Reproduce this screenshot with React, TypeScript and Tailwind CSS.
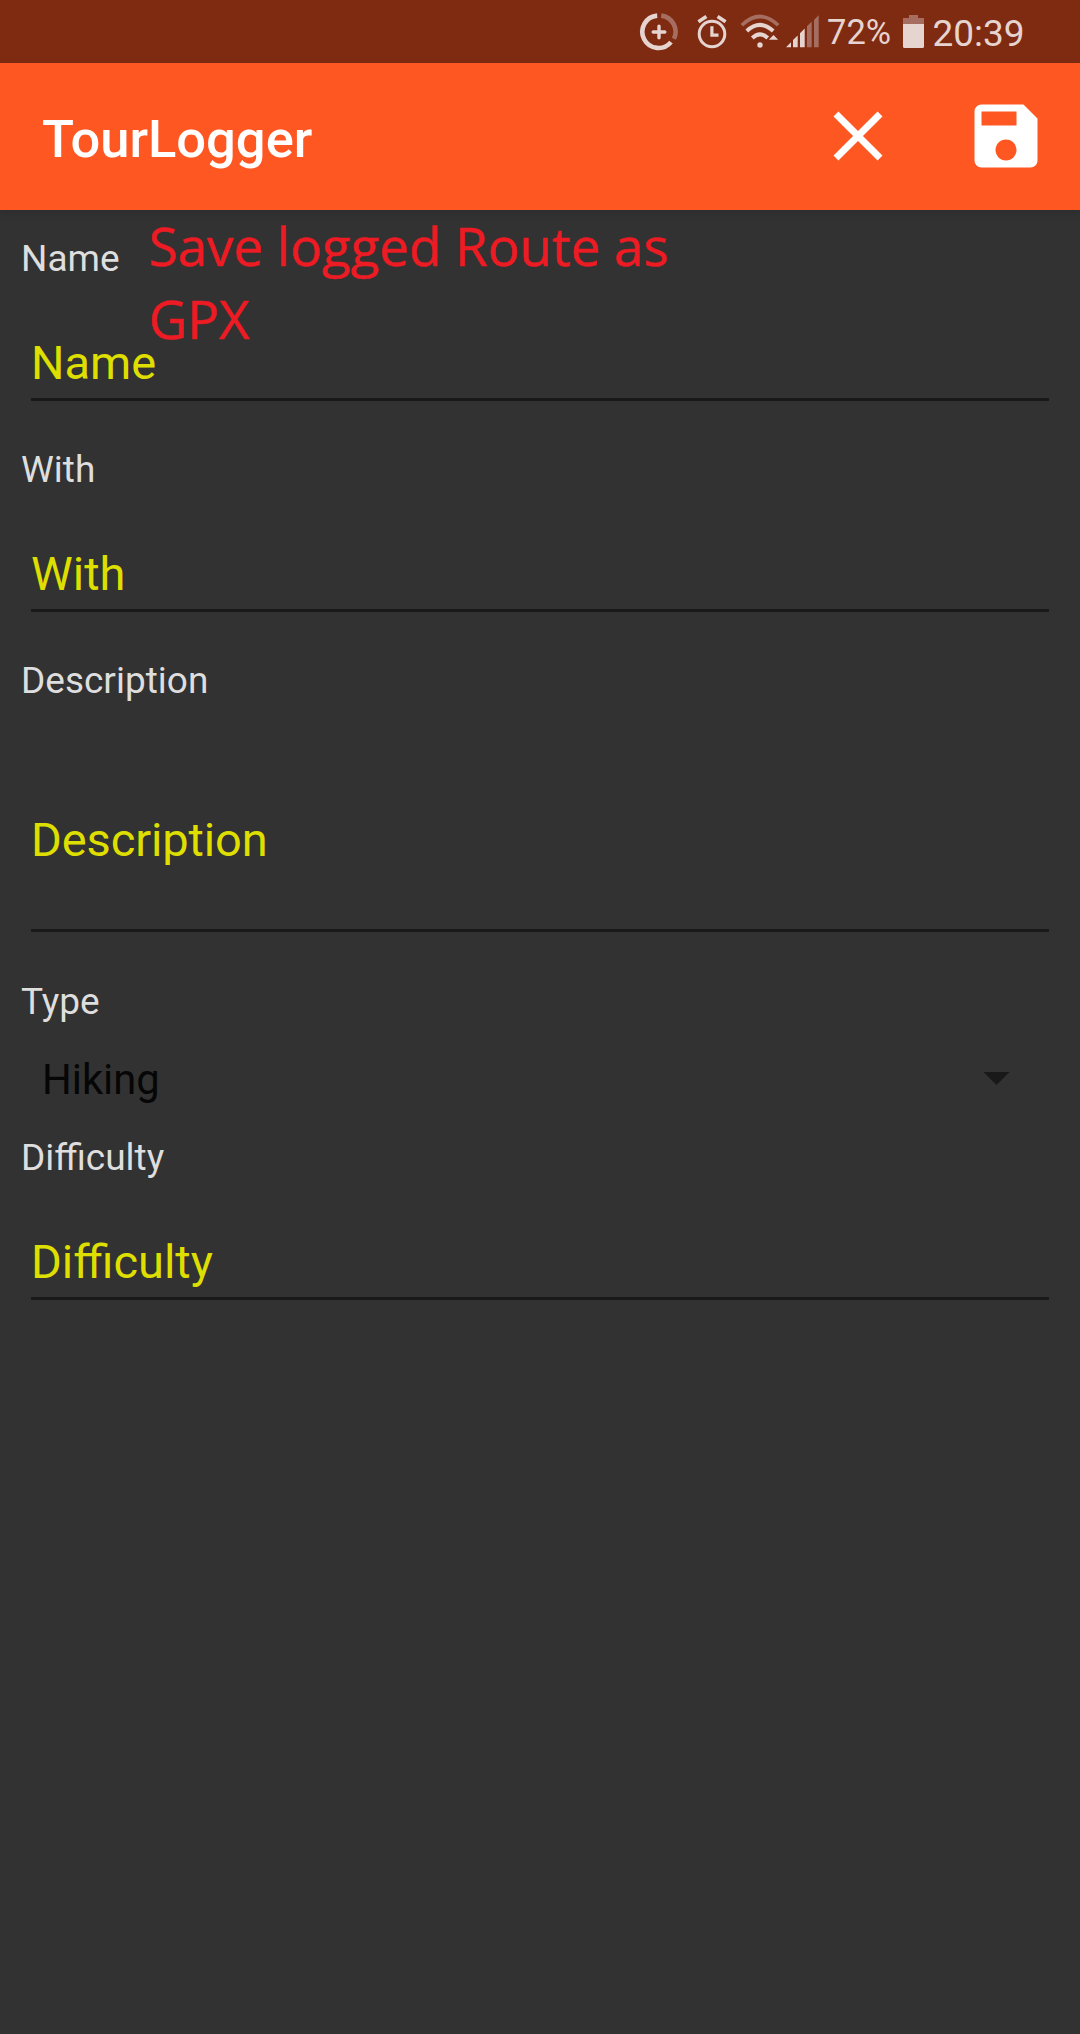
import React from "react";
import { MdClose, MdSave } from "react-icons/md";

const BRIGHT = "#e6d4d0";
const DIM = "#a66e60";

function DataSaverIcon() {
  return (
    <svg width="40" height="40" viewBox="0 0 40 40" fill="none">
      <path d="M18.2 3.6A16.2 16.2 0 1 0 32 30.1" stroke={BRIGHT} strokeWidth="4.6" />
      <path d="M22.2 3.6A16.2 16.2 0 0 1 34.9 26.8" stroke={DIM} strokeWidth="4.6" />
      <path d="M20 14.2v11.6M14.2 20h11.6" stroke={BRIGHT} strokeWidth="3.4" strokeLinecap="round" />
    </svg>
  );
}

function AlarmIcon() {
  return (
    <svg width="32" height="36" viewBox="0 0 32 36" fill="none" stroke={BRIGHT}>
      <circle cx="16" cy="20" r="12.8" strokeWidth="3" />
      <path d="M15.9 12.3v8.9h6.6" strokeWidth="3.2" />
      <path d="M2.4 7.8l8-5.2M29.6 7.8l-8-5.2" strokeWidth="3.6" />
    </svg>
  );
}

function WifiIcon() {
  return (
    <svg width="40" height="36" viewBox="0 0 40 36" fill="none">
      <path d="M1.8 11.2Q20-6.2 38.2 11.2" stroke={DIM} strokeWidth="3.6" />
      <path d="M6.8 17Q20 4.8 33.2 17" stroke={BRIGHT} strokeWidth="4" />
      <path d="M12.3 24Q20 16.8 27.7 24" stroke={BRIGHT} strokeWidth="4" />
      <circle cx="20" cy="31" r="2.7" fill={BRIGHT} />
      <path d="M28.8 25.8h9.4L33.5 21z" fill={BRIGHT} />
    </svg>
  );
}

function SignalIcon() {
  return (
    <svg width="33" height="33" viewBox="0 0 33 33">
      <path d="M0 32.3h5v-5z" fill={BRIGHT} />
      <path d="M7 32.3v-7.2l4.7-4.6v11.8zM14 32.3V18.2l4.7-4.7v18.8z" fill={BRIGHT} />
      <path d="M21 32.3V11.2l4.7-4.7v25.8zM28 32.3V4.9L32.7.2v32.1z" fill={DIM} />
    </svg>
  );
}

function BatteryIcon() {
  return (
    <svg width="21" height="33" viewBox="0 0 21 33">
      <path d="M0 9V3h6V0h9v3h6v6z" fill={DIM} />
      <path d="M0 9h21v22.5q0 1.5-1.5 1.5h-18Q0 33 0 31.5z" fill={BRIGHT} />
    </svg>
  );
}

function StatusBar() {
  return (
    <div className="flex h-[63px] items-start bg-[#7f2b11] pl-[638.5px] text-[#e6d4d0]">
      <div className="mt-[11.5px]"><DataSaverIcon /></div>
      <div className="mt-[14px] ml-[17px]"><AlarmIcon /></div>
      <div className="mt-[14px] ml-[12px]"><WifiIcon /></div>
      <div className="mt-[15px] ml-[6px]"><SignalIcon /></div>
      <span className="mt-[12px] ml-[8.5px] w-[64px] text-[34.5px] leading-[40px] whitespace-nowrap">72%</span>
      <div className="mt-[15px] ml-[11.5px]"><BatteryIcon /></div>
      <span className="mt-[12px] ml-[9px] text-[37px] leading-[44px] whitespace-nowrap">20:39</span>
    </div>
  );
}

function AppBar() {
  return (
    <header className="flex h-[147px] items-center bg-[#ff5722] pr-[32px] pl-[42px] text-white shadow-[0_2px_8px_rgba(0,0,0,0.15)]">
      <h1 className="flex-1 pt-[4px] text-[52.5px] leading-[62px] font-medium">TourLogger</h1>
      <div className="flex gap-[64px] pb-[2px]">
        <button aria-label="Cancel"><MdClose size={84} /></button>
        <button aria-label="Save"><MdSave size={84} /></button>
      </div>
    </header>
  );
}

function Label({ children }: { children: string }) {
  return <div className="h-[50px] pt-[1px] pl-[21px] text-[37px] leading-[50px] text-[#dedede]">{children}</div>;
}

function Field({ name, tall = false }: { name: string; tall?: boolean }) {
  return (
    <div>
      <Label>{name}</Label>
      <div
        className={
          tall
            ? "mx-[31px] border-b-[3px] border-[#191919] pt-[103px] pb-[57px] text-[47px] leading-[64px] tracking-[-0.12px] text-[#dede00]"
            : "mx-[31px] border-b-[3px] border-[#191919] pt-[48px] pb-[3px] text-[47px] leading-[64px] text-[#dede00]"
        }
      >
        {name}
      </div>
    </div>
  );
}

export default function App() {
  return (
    <div className="min-h-[2034px] w-[1080px] bg-[#323232] font-['Roboto',sans-serif]">
      <StatusBar />
      <AppBar />
      <main className="relative pt-[23px]">
        <div className="flex flex-col gap-[43px]">
          <Field name="Name" />
          <Field name="With" />
          <Field name="Description" tall />
        </div>
        <div className="mt-[44px]">
          <Label>Type</Label>
          <div className="mt-[26px] flex items-center justify-between pr-[70px] pl-[42px] text-[41.75px] leading-[56px] text-[#060606]">
            <span>Hiking</span>
            <svg className="mb-[3px]" width="27" height="13" viewBox="0 0 27 13">
              <path d="M.5 0h26l-13 13z" fill="#191919" />
            </svg>
          </div>
        </div>
        <div className="mt-[24px]">
          <Field name="Difficulty" />
        </div>
        <p className="absolute -top-px left-[149px] w-[560px] font-['Open_Sans',sans-serif] text-[53px] leading-[73px] tracking-[-0.08px] text-[#ed1c24] [-webkit-text-stroke:0.6px_#ed1c24]">
          Save logged Route as
          <br />
          GPX
        </p>
      </main>
    </div>
  );
}
